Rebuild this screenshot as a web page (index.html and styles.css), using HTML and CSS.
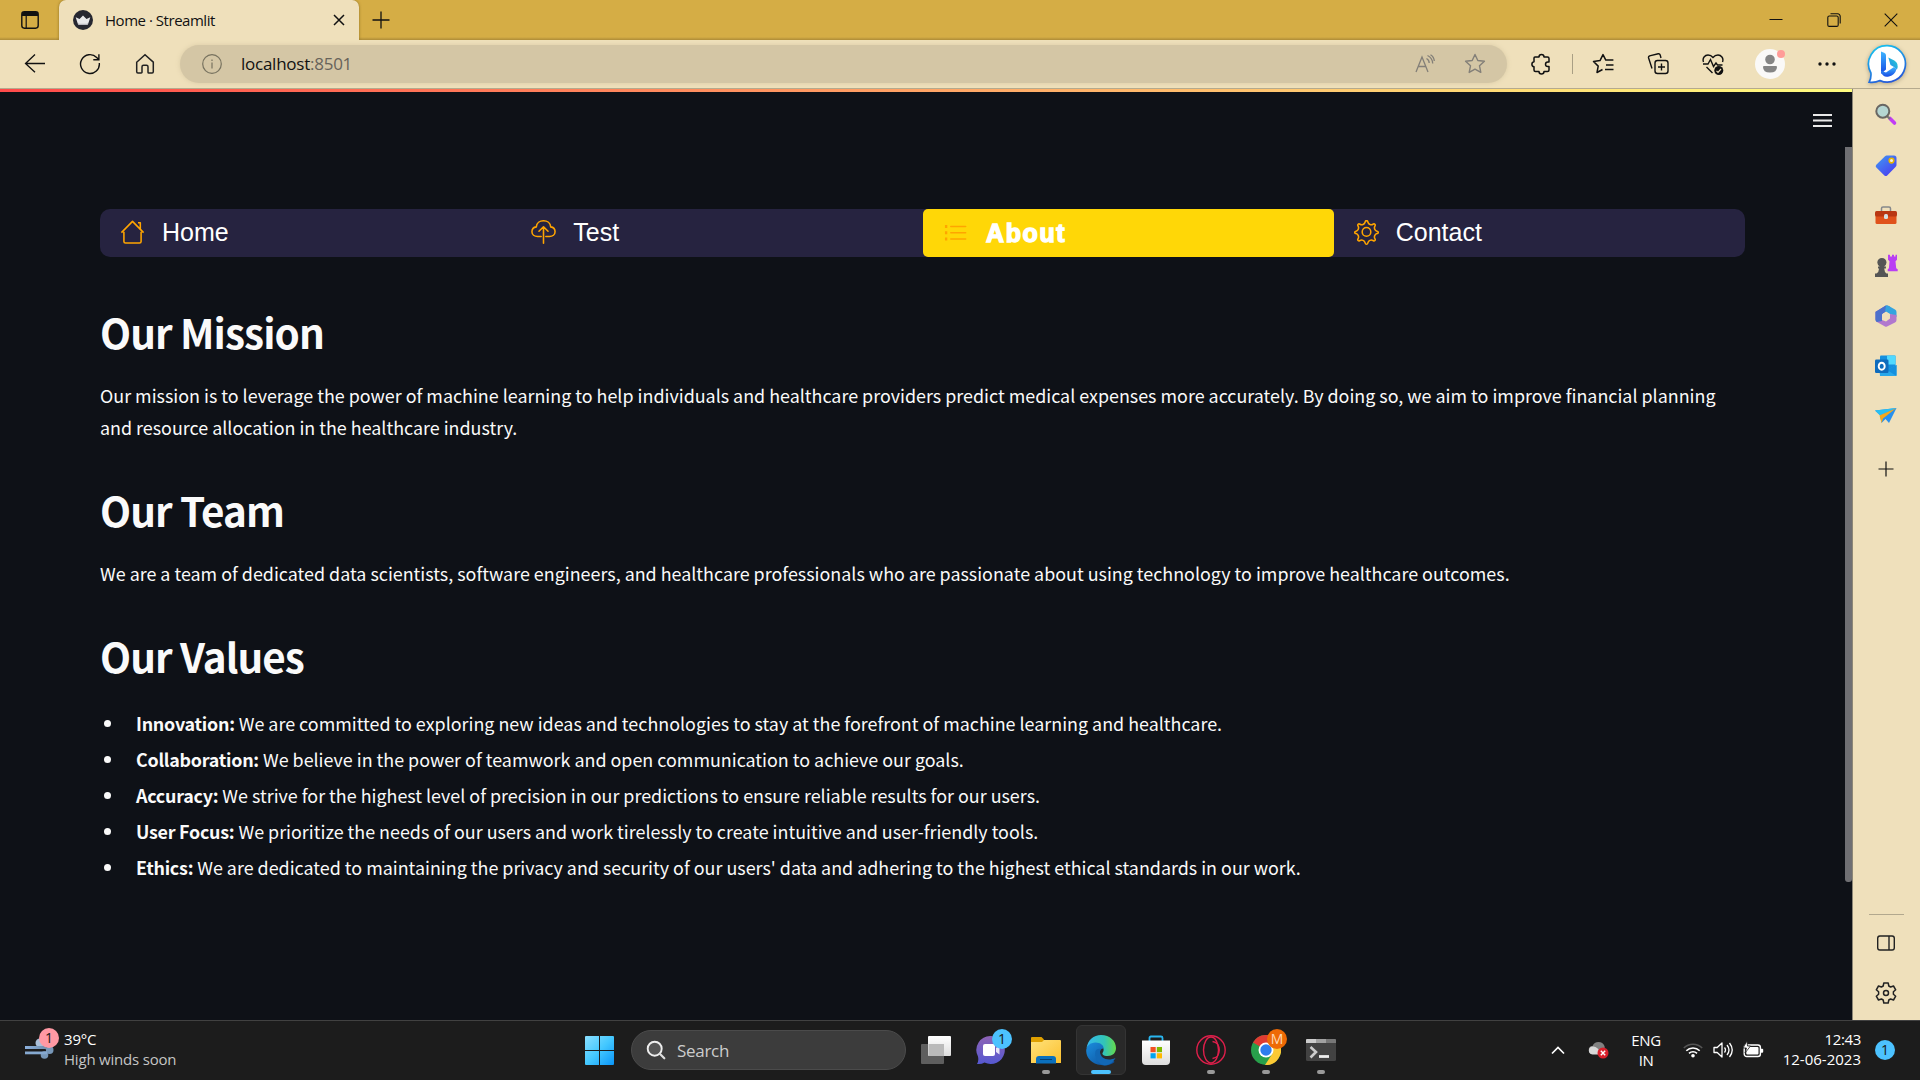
FILE: index.html
```html
<!DOCTYPE html>
<html lang="en">
<head>
<meta charset="utf-8">
<title>Home · Streamlit</title>
<link rel="stylesheet" href="styles.css">
</head>
<body>
<div class="screen">
  <header class="tabstrip">
    <div class="tab-actions"><svg width="20" height="20" viewBox="0 0 20 20"><rect x="1.8" y="1.8" width="16.4" height="16.4" rx="2.6" fill="none" stroke="#111" stroke-width="1.4"/><path d="M2 6V4a2 2 0 0 1 2-2h12a2 2 0 0 1 2 2v2z" fill="#111"/><path d="M6.2 6v12" stroke="#111" stroke-width="1.2"/></svg></div>
    <div class="tab">
      <svg class="favicon" width="20" height="20" viewBox="0 0 20 20"><circle cx="10" cy="10" r="10" fill="#262730"/><path d="M2.700 7.200l3.800 1.800L10 5.400 13.500 9l3.800-1.800-2.100 6.600q-5.200 1.200-10.400 0z" fill="#e8e8ea"/><path d="M4.800 13.800h10.400l-.5 1.200H5.300z" fill="#b9b9bf"/></svg>
      <span class="tab-title">Home · Streamlit</span>
      <svg class="tab-close" width="12" height="12" viewBox="0 0 12 12"><path d="M1 1l10 10M11 1L1 11" stroke="#111" stroke-width="1.5"/></svg>
    </div>
    <div class="new-tab"><svg width="18" height="18" viewBox="0 0 18 18"><path d="M9 .5v17M.5 9h17" stroke="#111" stroke-width="1.3"/></svg></div>
    <div class="window-controls">
      <svg width="14" height="14" viewBox="0 0 14 14"><path d="M.5 6.500h13" stroke="#111"/></svg>
      <svg width="14" height="14" viewBox="0 0 14 14" fill="none" stroke="#111" stroke-width="1.1"><rect x=".8" y="3" width="10.400" height="10.400" rx="1.500"/><path d="M3.500.8h7.200a2.500 2.500 0 0 1 2.500 2.500v7.200"/></svg>
      <svg width="14" height="14" viewBox="0 0 14 14"><path d="M.7.7l12.600 12.600M13.300.7L.7 13.300" stroke="#111" stroke-width="1.100"/></svg>
    </div>
  </header>

  <div class="toolbar">
    <div class="nav-buttons">
      <svg width="22" height="22" viewBox="0 0 22 22"><path d="M21 10.500H1.500M11 1.500L1.500 10.500l9.500 8.800" fill="none" stroke="#111" stroke-width="1.300"/></svg>
      <svg width="22" height="22" viewBox="0 0 22 22"><path d="M20.300 10a9.400 9.400 0 1 1-2.600-5.500l2 2M19.900 1.200v5.500h-5.600" fill="none" stroke="#111" stroke-width="1.400"/></svg>
      <svg width="22" height="22" viewBox="0 0 22 22"><path d="M2.700 9.200L11 1.700l8.300 7.500v9.600a1.200 1.200 0 0 1-1.200 1.200h-3.300a.8.800 0 0 1-.8-.8v-5.500a1.500 1.500 0 0 0-1.500-1.500h-3a1.500 1.500 0 0 0-1.500 1.500v5.500a.8.800 0 0 1-.8.800H3.900a1.200 1.200 0 0 1-1.200-1.200z" fill="none" stroke="#222" stroke-width="1.500"/></svg>
    </div>
    <div class="address">
      <svg width="20" height="20" viewBox="0 0 20 20"><circle cx="10" cy="10" r="9.300" fill="none" stroke="#77725f" stroke-width="1.200"/><path d="M10 8.600v6M10 5.400v1.500" stroke="#77725f" stroke-width="1.200"/></svg>
      <span class="url">localhost<span class="port">:8501</span></span>
      <div class="address-actions">
        <svg width="20" height="20" viewBox="0 0 20 20" fill="none" stroke="#837f78" stroke-width="1.300"><path d="M1 18L7 3l6 15M3.200 12.500h7.600M11.500 4.500q2.700 1.500 2.700 4.500M12.500 1.500q5 2.300 5.200 8M15.500.8q3.500 2.200 3.800 6.200"/></svg>
        <svg width="22" height="22" viewBox="0 0 22 22"><path d="M11 1.500l2.800 6 6.600.8-4.900 4.500 1.300 6.600-5.800-3.300-5.800 3.300 1.300-6.600-4.900-4.500 6.600-.8z" fill="none" stroke="#837f78" stroke-width="1.400" stroke-linejoin="round"/></svg>
      </div>
    </div>
    <div class="tools">
      <svg width="22" height="22" viewBox="0 0 22 22"><path d="M5 4h4a2.500 2.500 0 0 1 5 0h3.500q1.500 0 1.500 1.500V9h-1.200a2.300 2.300 0 0 0 0 4.600H19v3.400q0 1.500-1.500 1.500H14a2.500 2.500 0 0 1-5 0H5.500Q4 18.500 4 17v-3.200a2.600 2.600 0 0 1 0-5.100V5q0-1 1-1z" fill="none" stroke="#111" stroke-width="1.500" stroke-linejoin="round"/></svg>
      <i class="tool-divider"></i>
      <svg width="22" height="22" viewBox="0 0 22 22" fill="none" stroke="#111" stroke-width="1.500"><path d="M10.500 16.500l-5.500 3 1.200-6.400L1.500 8.500 8 7.600l3-6 2.800 5.500h7.600M14 12h7.500M13 16.500h8.500" stroke-linejoin="round"/></svg>
      <svg class="wide" width="22" height="22" viewBox="0 0 22 22" fill="none" stroke="#111" stroke-width="1.400"><rect x="8" y="7.500" width="13" height="13" rx="2.500"/><path d="M14.500 10.500v7M11 14h7M5 15.500L1.600 5q-.4-1.600 1-2.200l8.600-2q1.500-.3 2 1.200l.8 3"/></svg>
      <svg class="wide" width="22" height="22" viewBox="0 0 22 22" fill="none" stroke="#111" stroke-width="1.400"><path d="M1.500 9C0 5 3 2 6 2q3 0 5 2.500Q13 2 16 2c3 0 6 3 4.500 7M1 11h5l2.500-4.500 3 7 2.500-3.500 1.500 2h5M4.500 14l6 6"/><circle cx="16.800" cy="17.500" r="4.500" fill="#111" stroke="none"/><path d="M14.500 17.800l1.500 1.500 3-3.300" stroke="#efe0bb" stroke-width="1.200"/></svg>
      <div class="profile"><svg width="30" height="30" viewBox="0 0 30 30"><circle cx="15" cy="15" r="15" fill="#faf9f8"/><circle cx="15" cy="10.500" r="4.800" fill="#858585"/><path d="M8 18q0-1 1-1h12q1 0 1 1 0 5.500-7 5.500T8 18z" fill="#858585"/></svg><i></i></div>
      <svg class="more" width="22" height="22" viewBox="0 0 22 22" fill="#111"><circle cx="5" cy="11" r="1.700"/><circle cx="12" cy="11" r="1.700"/><circle cx="19" cy="11" r="1.700"/></svg>
    </div>
    <svg class="bing" width="40" height="40" viewBox="0 0 40 40"><defs><linearGradient id="bo" x1=".2" y1="0" x2=".6" y2="1"><stop stop-color="#18c3ee"/><stop offset="1" stop-color="#2457d8"/></linearGradient><linearGradient id="bb" x1="0" y1="0" x2="0" y2="1"><stop stop-color="#3eb5ff"/><stop offset="1" stop-color="#174ae4"/></linearGradient><linearGradient id="bc" x1="1" y1="0" x2="0" y2="1"><stop stop-color="#25d3cf"/><stop offset="1" stop-color="#2583f1"/></linearGradient></defs><path d="M20.500 1.700a18.200 18.200 0 1 1-7.500 34.900q-5 2.300-10.800 1.600 2.200-4.200 1.700-9.200A18.300 18.300 0 0 1 20.500 1.700z" fill="#fff" stroke="url(#bo)" stroke-width="1.700"/><path d="M14 7.500l3 1.200q2 .8 2 2.500v14.200l-5 4.600z" fill="url(#bb)"/><path d="M14 27l5 1.500 8-5.500 2.500 2q-1.500 6-7.500 7.500T14 28z" fill="url(#bb)"/><path d="M21.300 13.500l6 3q5 3 2.700 9l-3-2.500-3.500-2z" fill="url(#bc)"/></svg>
  </div>

  <div class="workspace">
    <main class="page">
      <div class="progress"></div>
      <div class="menu"><svg width="19" height="13" viewBox="0 0 19 13"><path d="M0 1h19M0 6.500h19M0 12h19" stroke="#e9e9e9" stroke-width="1.800"/></svg></div>
      <div class="scroll-thumb"></div>
      <div class="content">
        <nav class="tabs">
          <a class="item"><svg width="25" height="25" viewBox="0 0 16 16" fill="none" stroke="#ffa500"><path d="M2.500 7.500v6.200q0 1 1 1h9q1 0 1-1V7.500M.9 8.100L8 .9l7.100 7.200M11.500 1.700h1.500v4" stroke-linejoin="round"/></svg>Home</a>
          <a class="item"><svg width="25" height="25" viewBox="0 0 16 16" fill="none" stroke="#ffa500"><path d="M6.500 10.500H4.200C2.200 10.500.6 9.300.6 7.500c0-1.600 1.200-2.900 2.800-3.100C3.600 2 5.600.5 8 .5s4.400 1.500 4.600 3.900c1.600.2 2.800 1.500 2.800 3.100 0 1.800-1.600 3-3.600 3H9.500M8 14.900V4.500M5.100 7.200L8 4.300l2.900 2.900" stroke-linecap="round" stroke-linejoin="round"/></svg>Test</a>
          <a class="item active"><svg width="25" height="25" viewBox="0 0 16 16" stroke="#ffa500"><path d="M5 3.500h9.500M5 7.500h9.500M5 11.500h9.500" stroke-linecap="round"/><path d="M2 2.500v2M2 6.500v2M2 10.500v2" stroke-width="1.500"/></svg>About</a>
          <a class="item"><svg width="25" height="25" viewBox="0 .4 16 16" fill="none" stroke="#ffa500"><circle cx="8" cy="8" r="2.750"/><path d="M8.830 1.490c-.27-.93-1.390-.93-1.660 0l-.1.320c-.4 1.370-1.980 2.030-3.240 1.340l-.29-.16c-.65-.36-1.410.4-1.060 1.060l.16.290c.69 1.260.03 2.850-1.340 3.250l-.32.090c-.72.220-.72 1.100 0 1.320l.32.090c1.370.4 2.030 1.990 1.340 3.250l-.16.290c-.35.650.41 1.410 1.060 1.060l.29-.16c1.260-.69 2.840-.03 3.240 1.340l.1.320c.27.930 1.390.930 1.660 0l.1-.32c.4-1.370 1.980-2.030 3.240-1.340l.29.160c.65.350 1.410-.41 1.060-1.060l-.16-.29c-.69-1.260-.03-2.850 1.340-3.250l.32-.09c.72-.22.720-1.100 0-1.320l-.32-.09c-1.370-.4-2.030-1.990-1.340-3.250l.16-.29c.35-.66-.41-1.420-1.060-1.060l-.29.160c-1.260.69-2.840.03-3.240-1.340z"/></svg>Contact</a>
        </nav>
        <h1>Our Mission</h1>
        <p class="mission">Our mission is to leverage the power of machine learning to help individuals and healthcare providers predict medical expenses more accurately. By doing so, we aim to improve financial planning<br>and resource allocation in the healthcare industry.</p>
        <h1>Our Team</h1>
        <p>We are a team of dedicated data scientists, software engineers, and healthcare professionals who are passionate about using technology to improve healthcare outcomes.</p>
        <h1>Our Values</h1>
        <ul>
          <li><b>Innovation:</b> We are committed to exploring new ideas and technologies to stay at the forefront of machine learning and healthcare.</li>
          <li><b>Collaboration:</b> We believe in the power of teamwork and open communication to achieve our goals.</li>
          <li><b>Accuracy:</b> We strive for the highest level of precision in our predictions to ensure reliable results for our users.</li>
          <li><b>User Focus:</b> We prioritize the needs of our users and work tirelessly to create intuitive and user-friendly tools.</li>
          <li><b>Ethics:</b> We are dedicated to maintaining the privacy and security of our users' data and adhering to the highest ethical standards in our work.</li>
        </ul>
      </div>
    </main>
    <aside class="sidebar">
      <svg width="24" height="24" viewBox="0 0 24 24"><path d="M16 15.500l4.500 4.500" stroke="#c23cf5" stroke-width="3.600" stroke-linecap="round"/><path d="M13 13l3 3" stroke="#777" stroke-width="2.200"/><circle cx="8.800" cy="8.200" r="6.500" fill="#b5d6d2" stroke="#696763" stroke-width="2"/></svg>
      <svg width="24" height="24" viewBox="0 0 24 24"><defs><linearGradient id="tg" x1="0" y1="0" x2=".8" y2="1"><stop stop-color="#3f9cf2"/><stop offset="1" stop-color="#4b3cf0"/></linearGradient></defs><path d="M12.500 2.500h7.500q2.500 0 2.500 2.500v7q0 1-1 2l-8.300 8.400q-1.400 1.400-2.800 0L2.300 14.500q-1.300-1.300 0-2.700L11 3.300q.8-.8 1.500-.8z" fill="url(#tg)"/><circle cx="17.500" cy="7.600" r="2.300" fill="#eee" stroke="#e9b500" stroke-width="1.600"/></svg>
      <svg width="24" height="24" viewBox="0 0 24 24"><path d="M7.500 8V5.500Q7.500 4 9 4h6q1.500 0 1.500 1.500V8" fill="none" stroke="#85888b" stroke-width="1.500"/><rect x="1.500" y="12" width="21" height="9" rx="1.500" fill="#e0521b"/><rect x="1" y="8" width="22" height="5.500" rx="1.500" fill="#b93712"/><rect x="10" y="11" width="4" height="5" rx="1.500" fill="#d4e0e3"/></svg>
      <svg width="24" height="24" viewBox="0 0 24 24"><path d="M14 .8h2v1.700h2V.8h2v1.700h1.500V.8H23v5l-1.500 1.500.7 7 1.500 1v2h-10v-2l1.200-1 .6-7L14 5.800z" fill="#b93ff3"/><path d="M4 12.500h1.700q-2.400-1.800-2.400-4a4.600 4.600 0 0 1 9.200 0q0 2.200-2.400 4h1.800v2h-1.700q.2 3.500 2.300 5h1.500v3.500H1v-3.500h1.500q2.400-1.500 2.600-5H4z" fill="#555"/></svg>
      <svg width="24" height="24" viewBox="0 0 24 24"><path d="M12 1.500l4 1-4 5-4 2v7L3 18q-1.500-1-1.500-2.500V7.800z" fill="#7463c5"/><path d="M12 1.500q1-.6 2 0L21 5.500q1.500.9 1.500 2.500v5L16 10l-4-2.500-4 2 1-6z" fill="#34a4df"/><path d="M22.500 11v5q0 1.500-1.500 2.500l-8 4q-1 .6-2 0L3 18l5-2 4 1.500 4-3V10z" fill="#b178ce"/><path d="M9 3.200L12 1.500 11 8l-3 2.500V17l-5 1q-1.500-1-1.500-2.500V8z" fill="#4c70cc"/><path d="M12 8l3.600 2v4L12 16.200 8.400 14v-4z" fill="#efe0bb"/></svg>
      <svg width="24" height="24" viewBox="0 0 24 24"><rect x="6" y="1.500" width="15.500" height="19" rx="1" fill="#1490df"/><path d="M13 1.500h8.500v9H13z" fill="#50d9ff"/><path d="M5 11l8 5 9.500-5v10q0 1-1 1H6z" fill="#28a8ea"/><path d="M13 16l9.500 6V11z" fill="#1490df"/><rect x="1" y="5.500" width="13.500" height="13.500" rx="1.200" fill="#0f6cbd"/><ellipse cx="7.700" cy="12.200" rx="3" ry="3.500" fill="none" stroke="#fff" stroke-width="1.900"/></svg>
      <svg width="24" height="24" viewBox="0 0 24 24"><path d="M1 6.500L22.500 4 15 19l-3.500-4-4 4L6 11z" fill="#2790ee"/><path d="M1 6.500L22.500 4 6 11.500z" fill="#29bff1"/><path d="M5.500 11.500L22 4.200 9 14.500 7.500 19z" fill="#f5a81c"/></svg>
      <svg class="add" width="16" height="16" viewBox="0 0 16 16"><path d="M8 .5v15M.5 8h15" stroke="#111" stroke-width="1.200"/></svg>
      <div class="side-foot">
        <i></i>
        <svg width="20" height="18" viewBox="0 0 20 18" fill="none" stroke="#222" stroke-width="1.400"><rect x="1.700" y="2" width="16.600" height="14" rx="2.200"/><path d="M13 2v14"/></svg>
        <svg width="24" height="24" viewBox="0 0 24 24" fill="none" stroke="#222" stroke-width="1.500" stroke-linejoin="round"><circle cx="12" cy="12" r="2.500"/><path d="M9.800 2h4.400l.6 3 1.800 1 2.900-1 2.200 3.800-2.300 2v2.400l2.300 2-2.200 3.800-2.900-1-1.800 1-.6 3H9.800l-.6-3-1.800-1-2.900 1-2.200-3.800 2.300-2v-2.400l-2.300-2L4.500 5l2.900 1 1.800-1z"/></svg>
      </div>
    </aside>
  </div>

  <footer class="taskbar">
    <div class="weather">
      <div class="wind"><svg width="30" height="34" viewBox="0 0 30 34"><defs><linearGradient id="wg"><stop stop-color="#8cb0dd"/><stop offset="1" stop-color="#6f8fae"/></linearGradient></defs><circle cx="16" cy="16" r="4.500" fill="#a9bfd8"/><circle cx="25.500" cy="23" r="4" fill="#7797b8"/><circle cx="20.500" cy="28" r="3.800" fill="#7797b8"/><path d="M1 19h21v3H1z" fill="url(#wg)"/><path d="M1 24.500h22v2.800H1z" fill="#86a9d0"/><path d="M1 22.500h21v1.500H1z" fill="#1c1c1c"/></svg><span class="count pink">1</span></div>
      <div class="forecast"><span>39°C</span><span class="dim">High winds soon</span></div>
    </div>
    <div class="apps">
      <svg class="start" width="29" height="29" viewBox="0 0 29 29"><defs><linearGradient id="wn" x1="0" y1="0" x2="1" y2="1"><stop stop-color="#8be0ff"/><stop offset=".5" stop-color="#44c8ff"/><stop offset="1" stop-color="#0a95f8"/></linearGradient></defs><path d="M1 0h13v14H0V1q0-1 1-1zM15 0h13q1 0 1 1v13H15zM0 15h14v14H1q-1 0-1-1zM15 15h14v13q0 1-1 1H15z" fill="url(#wn)"/></svg>
      <div class="search"><svg width="20" height="20" viewBox="0 0 20 20"><circle cx="8.700" cy="8.700" r="7" fill="#555" stroke="#eee" stroke-width="1.900"/><path d="M13.800 13.800l4.500 4.500" stroke="#ddd" stroke-width="2.200" stroke-linecap="round"/></svg><span>Search</span></div>
      <div class="app"><svg width="30" height="30" viewBox="0 0 30 30"><defs><linearGradient id="tv" x1="0" y1="0" x2="0" y2="1"><stop stop-color="#fff"/><stop offset="1" stop-color="#ddd"/></linearGradient></defs><rect y="9" width="23" height="20" rx="1" fill="#5e5e5e"/><rect x="7" y="1" width="23" height="20" rx="1" fill="url(#tv)"/><path d="M7.500 9H23v12H7.500z" fill="#bababa"/></svg></div>
      <div class="app"><svg width="30" height="30" viewBox="0 0 30 30"><defs><linearGradient id="ch" x1="0" y1="0" x2="0" y2="1"><stop stop-color="#8e63b5"/><stop offset="1" stop-color="#5558d1"/></linearGradient></defs><path d="M15 1a14 14 0 1 1-6.500 26.500Q5.500 29.500 1 29q2-3 1-7.500A14 14 0 0 1 15 1z" fill="url(#ch)"/><rect x="7" y="9" width="12" height="12" rx="2" fill="#fff"/><path d="M20 13l3.500-2.500v9L20 17z" fill="#e8e4f7"/></svg><span class="count blue">1</span></div>
      <div class="app"><svg width="30" height="30" viewBox="0 0 30 30"><defs><linearGradient id="fd" x1="0" y1="0" x2="1" y2="1"><stop stop-color="#ffe27b"/><stop offset="1" stop-color="#fcc02e"/></linearGradient></defs><path d="M0 9V3q0-1 1-1h9.500L13 4.500V9z" fill="#dfa000"/><path d="M0 7h11l2-2h16q1 0 1 1v22H0z" fill="url(#fd)"/><path d="M5 28.500V24q0-3 3-3h14q3 0 3 3v4.500z" fill="#0b70bd"/><path d="M9 24.500h12" stroke="#073f72"/></svg><i class="run"></i></div>
      <div class="app current"><svg width="32" height="32" viewBox="0 0 32 32"><defs><linearGradient id="ed"><stop stop-color="#35b8ef"/><stop offset=".6" stop-color="#32c4b8"/><stop offset="1" stop-color="#65da4b"/></linearGradient><linearGradient id="ee" x1="0" y1="0" x2="1" y2="1"><stop stop-color="#1b8ddd"/><stop offset="1" stop-color="#0c4b97"/></linearGradient></defs><path d="M1.500 14C3 6 8.500 1 16 1c9 0 15 6 15 13 0 5-3.500 8-8.500 8-4 0-5.500-1.500-5-3 2.500-3 1-8-5-9-5-.5-9 1-11 4z" fill="url(#ed)"/><path d="M1.200 17c0-5 4-8.500 9.300-8.500 5 0 8.500 3 8 6-4 0-7 4-5 8.500 2 4.300 7 6.500 12 4.800 2-.7 3.500-1.500 4 .2C26 31 20.500 32 16 31 7 30 1.200 24 1.200 17z" fill="url(#ee)"/><path d="M10.500 17c-1.500 6 2 12.500 8.500 14.300 5 .2 9-2.800 11.500-7.300-8 3.500-15 .5-15.500-6 .2-1.500 1-2.500 1.500-3-3-.5-5.200.5-6 2z" fill="#1268b5"/></svg><i class="run"></i></div>
      <div class="app"><svg width="30" height="30" viewBox="0 0 30 30"><defs><linearGradient id="st" x1="0" y1="0" x2="0" y2="1"><stop stop-color="#fff"/><stop offset="1" stop-color="#ddd"/></linearGradient></defs><path d="M8.500 6V3q0-1.500 1.500-1.500h10q1.500 0 1.500 1.500v3" fill="none" stroke="#29b6ef" stroke-width="1.800"/><path d="M1 5.500h28V26q0 4-4 4H5q-4 0-4-4z" fill="url(#st)"/><path d="M9.500 12h5.200v5.200H9.500z" fill="#f25022"/><path d="M15.800 12H21v5.200h-5.200z" fill="#7fba00"/><path d="M9.500 18.200h5.200v5.200H9.500z" fill="#00a4ef"/><path d="M15.800 18.200H21v5.200h-5.200z" fill="#ffb900"/></svg></div>
      <div class="app"><svg width="30" height="30" viewBox="0 0 30 30" fill="none" stroke="#df1f4b"><circle cx="15" cy="15" r="14.200" stroke-width="1.400"/><ellipse cx="15" cy="15" rx="7.500" ry="13" stroke-width="1.400"/><path d="M16.500 6.500c9 1 9 16 0 17" stroke-width="1.400"/></svg><i class="run"></i></div>
      <div class="app"><svg width="30" height="30" viewBox="0 0 30 30"><circle cx="15" cy="15" r="15" fill="#28a04b"/><path d="M15 15L2 7.500A15 15 0 0 1 28 7.500L29 11H15z" fill="#df3b32"/><path d="M15 8h13.300A15 15 0 0 1 14 30l7.500-11.500z" fill="#fcc934"/><circle cx="15" cy="15" r="7.500" fill="#fff"/><circle cx="15" cy="15" r="5.700" fill="#2f7ded"/></svg><span class="count orange">M</span><i class="run"></i></div>
      <div class="app"><svg width="30" height="24" viewBox="0 0 30 24"><rect y="1" width="30" height="22" rx="1.500" fill="#424242"/><path d="M1 1h9v4H0V2q0-1 1-1z" fill="#ccc"/><path d="M10 1h10v4H10z" fill="#a1a1a1"/><path d="M20 1h9q1 0 1 1v3H20z" fill="#777"/><path d="M4.500 9l5.500 5-5.500 5.500" fill="none" stroke="#ccc" stroke-width="2.600"/><path d="M13 18.500h10" stroke="#eee" stroke-width="2.800"/></svg><i class="run"></i></div>
    </div>
    <div class="tray">
      <svg class="chev" width="14" height="9" viewBox="0 0 14 9"><path d="M1 7.500l6-6 6 6" fill="none" stroke="#fff" stroke-width="1.700"/></svg>
      <svg class="cloud" width="21" height="18" viewBox="0 0 21 18"><path d="M5 13a4 4 0 0 1-.5-8A6.500 6.500 0 0 1 16.500 5l1 8z" fill="#818181"/><path d="M4.500 13.500a4 4 0 1 1 .8-8q4.500 0 8.500 8z" fill="#d8d8d8"/><circle cx="15" cy="12" r="5.500" fill="#d9202b"/><path d="M12.800 9.800l4.400 4.400M17.200 9.800l-4.400 4.400" stroke="#fff" stroke-width="1.400"/></svg>
      <div class="lang"><span>ENG</span><span>IN</span></div>
      <svg class="wifi" width="20" height="16" viewBox="0 0 20 16" fill="none" stroke-width="1.600"><path d="M.8 6a13 13 0 0 1 18.400 0" stroke="#555"/><path d="M3.300 8.800a9.500 9.500 0 0 1 13.400 0M6 11.400a5.800 5.800 0 0 1 8 0" stroke="#fff"/><circle cx="10" cy="13.700" r="1.800" fill="#fff"/></svg>
      <svg class="volume" width="20" height="18" viewBox="0 0 20 18" fill="none" stroke="#fff" stroke-width="1.300"><path d="M1 6.500h3.200L9 2v14l-4.800-4.500H1z" stroke-linejoin="round"/><path d="M11.500 6.500q2 2.500 0 5M14 4q4 5 0 10M16.500 2q5.500 7 0 14"/></svg>
      <svg class="battery" width="21" height="18" viewBox="0 0 21 18"><rect x="1.200" y="4" width="16.200" height="11.500" rx="2.500" fill="none" stroke="#fff" stroke-width="1.400"/><rect x="3.300" y="6" width="12.200" height="7.500" rx="1" fill="#fff"/><path d="M18 7.700h1.200q1 0 1 1v2q0 1-1 1H18z" fill="#fff"/><path d="M4 0L0 7h3.500L2 12l5.500-7H4.500z" fill="#fff" stroke="#1c1c1c" stroke-width=".8"/></svg>
      <div class="clock"><span>12:43</span><span class="date">12-06-2023</span></div>
      <span class="count blue notice">1</span>
    </div>
  </footer>
</div>
</body>
</html>
```
FILE: styles.css
```css
* { box-sizing: border-box; }
body { margin: 0; font-family: "Open Sans", "Noto Sans", sans-serif; color: #111; }
svg { display: block; flex: none; }
.screen { width: 1920px; height: 1080px; display: flex; flex-direction: column; overflow: hidden; background: #efe0bb; }

.tabstrip { height: 40px; flex: none; display: flex; background: linear-gradient(#d5ad45 37px, #ad8b38 40px); }
.tab-actions { width: 59px; display: grid; place-items: center; }
.tab { width: 300px; padding: 0 14px; display: flex; align-items: center; background: #efe0bb; border-radius: 7px 7px 0 0; box-shadow: 0 0 3px #8b6d20; clip-path: inset(0 -4px 0 -4px); }
.tab-title { margin-left: 12px; padding-bottom: 1px; font-size: 15px; letter-spacing: -.47px; line-height: 20px; }
.tab-close { margin-left: auto; }
.new-tab { width: 44px; display: grid; place-items: center; }
.window-controls { margin-left: auto; width: 172px; display: flex; align-items: center; gap: 43.500px; padding-left: 21px; }

.toolbar { height: 49px; flex: none; display: flex; align-items: center; border-bottom: 1px solid #b5aa8e; background: #efe0bb; }
.nav-buttons { width: 180px; display: flex; gap: 33px; padding-left: 24px; }
.address { width: 1327px; height: 38px; display: flex; align-items: center; padding: 0 21px 0 22px; border-radius: 19px; background: #d4c6a5; box-shadow: 0 0 5px #d9caa6; }
.url { margin-left: 19px; padding-bottom: 2px; font-size: 17px; letter-spacing: -.25px; }
.port { color: #67635a; }
.address-actions { margin-left: auto; display: flex; align-items: center; gap: 29px; }
.tools { width: 361px; display: flex; align-items: center; gap: 19.500px; padding-left: 23px; }
.tools .wide { margin-left: 13.500px; }
.tool-divider { width: 1px; height: 20px; background: #a99f84; }
.profile { position: relative; margin-left: 11.500px; }
.profile i { position: absolute; width: 8px; height: 8px; right: 0; top: 1px; border-radius: 50%; background: #ff9c98; }
.more { margin-left: 10.500px; }
.bing { margin-left: -1px; filter: drop-shadow(0 1px 2px #0004); }

.workspace { height: 931px; flex: none; display: flex; }
.page { position: relative; width: 1853px; background: #0e1117; border-right: 1px solid #8d8777; }
.progress { height: 3px; background: linear-gradient(90deg, #ff4b4b, #fffd80); }
.menu { display: flex; justify-content: flex-end; padding: 22px 20px 0 0; }
.scroll-thumb { position: absolute; right: 0; top: 58px; width: 7px; height: 735px; border-radius: 0 0 3px 3px; background: #6f6f73; }
.content { padding: 82px 107px 0 100px; }
.tabs { height: 48px; display: flex; border-radius: 10px; overflow: hidden; background: #262340; font-family: "Liberation Sans", Arial, sans-serif; font-size: 25px; color: #fff; }
.item { flex: 1; display: flex; align-items: center; gap: 17px; padding: 0 20px 2px; }
.active { gap: 18.500px; padding-bottom: 0; background: #ffd707; border-radius: 5px; font-weight: 700; letter-spacing: 1.600px; -webkit-text-stroke: 1.400px #fff; }

h1, p, ul { font-family: "Noto Sans CJK SC", sans-serif; color: #fafafa; }
h1 { margin: 40px 0 20px; font-size: 40.400px; line-height: 54px; font-weight: 700; letter-spacing: -.9px; }
.tabs + h1 { margin: 48px 0 20px; }
p { margin: 0; font-size: 17.905px; line-height: 32px; white-space: nowrap; }
ul { margin: 24px 0 0; padding: 0 0 0 25px; display: grid; gap: 4px; font-size: 17.905px; line-height: 32px; white-space: nowrap; }
li { padding-left: 11px; }
b { letter-spacing: -.25px; }

.sidebar { width: 67px; display: flex; flex-direction: column; align-items: center; padding: 14px 1px 0 0; gap: 26.200px; background: #efe0bb; }
.add { margin-top: 7px; }
.side-foot { margin-top: auto; display: flex; flex-direction: column; align-items: center; padding-bottom: 15px; }
.side-foot i { width: 35px; height: 1px; background: #b2a88e; margin-bottom: 19px; }
.side-foot svg + svg { margin-top: 29px; }

.taskbar { height: 60px; flex: none; display: flex; background: #1c1c1c; border-top: 1px solid #414141; color: #fff; font-size: 15px; }
.weather { width: 585px; flex: none; display: flex; padding: 6px 0 0 24px; gap: 10px; }
.wind { position: relative; height: 40px; }
.count { position: absolute; width: 20px; height: 20px; border-radius: 50%; font-size: 14px; line-height: 20px; text-align: center; color: #171717; }
.pink { background: #ff99a4; left: 15px; top: 1px; }
.blue { background: #4cc2ff; }
.forecast, .lang, .clock { display: flex; flex-direction: column; line-height: 20px; }
.forecast { letter-spacing: -.2px; padding-top: 2px; }
.dim { color: #c5c5c5; }
.apps { width: 770px; flex: none; display: flex; align-items: center; padding-bottom: 1px; }
.search { width: 275px; flex: none; height: 40px; margin: 0 5px 0 17px; display: flex; align-items: center; gap: 11px; padding-left: 14px; border-radius: 20px; background: #3c3c3c; border: 1px solid #4b4b4b; font-size: 17px; letter-spacing: -.3px; color: #ccc; }
.app { position: relative; flex: none; width: 50px; height: 50px; margin-right: 5px; display: grid; place-items: center; border-radius: 6px; }
.current { background: #292929; border: 1px solid #343434; }
.run { position: absolute; left: calc(50% - 4px); bottom: 1px; width: 8px; height: 4px; border-radius: 2px; background: #999; }
.current .run { left: calc(50% - 10px); bottom: 0; width: 20px; background: #4cc2ff; }
.app .count { left: 26px; top: 4px; }
.app .orange { background: #ee6a05; color: #ffd9b5; }
.tray { width: 565px; flex: none; display: flex; align-items: center; padding: 0 0 1px 196px; }
.cloud { margin-left: 23px; }
.lang { width: 40px; margin-left: 17px; padding-bottom: 1px; text-align: center; letter-spacing: -.4px; }
.wifi { margin-left: 17px; }
.volume { margin-left: 10px; }
.battery { margin-left: 10px; }
.clock { width: 90px; margin-left: 7px; padding-bottom: 2px; text-align: right; letter-spacing: -.35px; }
.date { letter-spacing: 0; }
.notice { position: static; margin-left: 14px; }
```
